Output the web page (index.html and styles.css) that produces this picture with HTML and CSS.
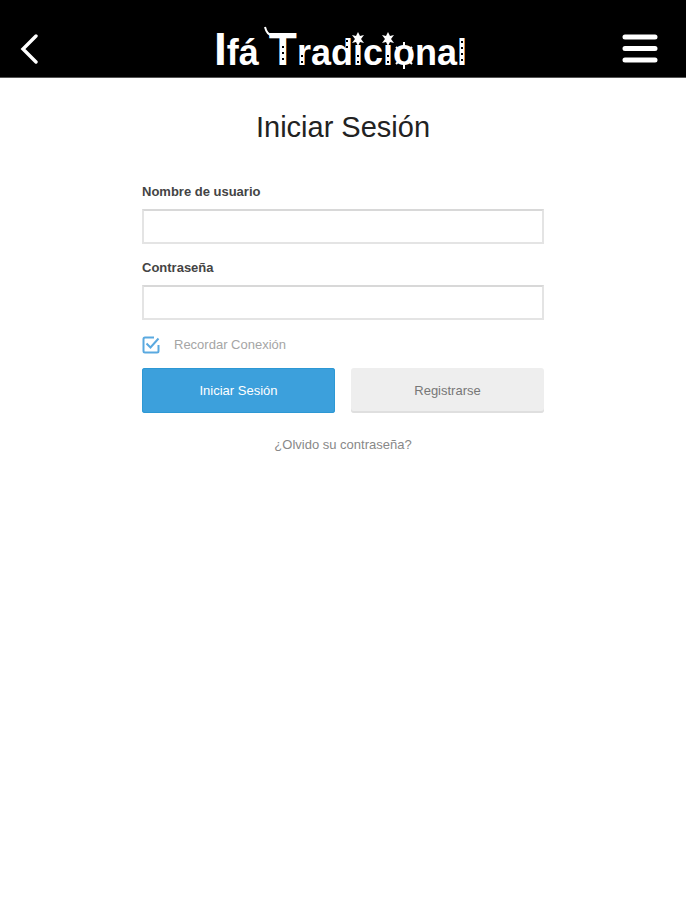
FILE: index.html
```html
<!DOCTYPE html>
<html lang="es">
<head>
    <meta charset="UTF-8">
    <meta name="viewport" content="width=device-width, initial-scale=1.0">
    <title>Ifá Tradicional</title>
    <link rel="stylesheet" href="styles.css">
</head>
<body>
    <header class="header">
        <button type="button" class="icon-btn" aria-label="Volver">
            <svg width="20" height="32" viewBox="0 0 20 32">
                <path d="M16 4L3 17L16 30" fill="none" stroke="#fff" stroke-width="3.4" stroke-linecap="round"/>
            </svg>
        </button>
        <svg class="logo" width="264" height="56" viewBox="0 0 264 56">
            <text class="logo-text" x="7" y="45"><tspan class="logo-cap">I</tspan>fá <tspan class="logo-cap">T</tspan>radicional</text>
            <!-- stars over the i's, rays round the o, curl on the T -->
            <g fill="#fff">
                <path d="M151 12l2 4 4-1-3 4 3 4-4-1-2 4-2-4-4 1 3-4-3-4 4 1z"/>
                <path d="M181 12l2 4 4-1-3 4 3 4-4-1-2 4-2-4-4 1 3-4-3-4 4 1z"/>
            </g>
            <path class="logo-rays" d="M197 22v4M197 45v4M189 27l2 2M205 27l-2 2M189 44l2-2M205 44l-2-2M65 15q-5 0-7-8"/>
            <!-- notches cut in the stems -->
            <path class="logo-dots" d="M76 26v16M95 35v8M151 35v8M181 35v8M140 20v8M255 21v20"/>
        </svg>
        <button type="button" class="icon-btn" aria-label="Menú">
            <svg width="36" height="32" viewBox="0 0 36 32">
                <path d="M3 5H33M3 16.500H33M3 28H33" fill="none" stroke="#fff" stroke-width="5" stroke-linecap="round"/>
            </svg>
        </button>
    </header>

    <main class="login">
        <h1 class="title">Iniciar Sesión</h1>
        <form class="form">
            <label class="label" for="usuario">Nombre de usuario</label>
            <input class="field" type="text" id="usuario" name="usuario">

            <label class="label" for="clave">Contraseña</label>
            <input class="field" type="password" id="clave" name="clave">

            <label class="remember">
                <input class="check" type="checkbox" name="recordar" checked>
                <svg class="check-icon" width="18" height="18" viewBox="0 0 18 18">
                    <path d="M12 1.500H3Q1.500 1.500 1.500 3V15Q1.500 16.500 3 16.500H15Q16.500 16.500 16.500 15V9"/>
                    <path d="M4.500 7.500L8.500 11.500L16.500 2.500"/>
                </svg>
                <span>Recordar Conexión</span>
            </label>

            <div class="buttons">
                <button type="submit" class="btn btn-blue">Iniciar Sesión</button>
                <button type="button" class="btn btn-grey">Registrarse</button>
            </div>

            <a class="forgot" href="#">¿Olvido su contraseña?</a>
        </form>
    </main>
</body>
</html>
```
FILE: styles.css
```css
* {
    box-sizing: border-box;
}

body {
    margin: 0;
    background: #fff;
    font-family: "Liberation Sans", Arial, sans-serif;
    font-size: 13px;
    line-height: 16px;
}

/* Header */
.header {
    display: flex;
    align-items: center;
    justify-content: space-between;
    height: 78px;
    padding: 18px 28px 0 20px;
    background: #000;
    border-bottom: 1px solid #555;
}

.icon-btn {
    display: flex;
    width: 36px;
    padding: 0;
    border: 0;
    background: none;
    cursor: pointer;
}

.logo {
    display: block;
}

.logo-text {
    fill: #fff;
    font-family: "Liberation Sans", Arial, sans-serif;
    font-size: 36px;
    font-weight: 700;
}

.logo-cap {
    font-size: 46px;
}

.logo-rays {
    fill: none;
    stroke: #fff;
    stroke-width: 2;
}

.logo-dots {
    fill: none;
    stroke: #000;
    stroke-width: 2;
    stroke-dasharray: 2 4;
}

/* Login form */
.login {
    max-width: 434px;
    margin: 0 auto;
    padding: 31px 16px;
}

.title {
    margin: 0 0 39px;
    color: #222;
    font-size: 29px;
    font-weight: 400;
    line-height: 36px;
    text-align: center;
}

.form {
    display: flex;
    flex-direction: column;
}

.label {
    margin-bottom: 9px;
    color: #444;
    font-weight: 700;
}

.field {
    width: 100%;
    height: 35px;
    margin: 0 0 16px;
    padding: 0 10px;
    border: 2px solid #e4e4e4;
    border-top-color: #d8d8d8;
    background: #fff;
    font: inherit;
}

.remember {
    display: flex;
    align-items: center;
    gap: 14px;
    height: 18px;
    margin-bottom: 14px;
    color: #a5a5a5;
    cursor: pointer;
}

.check {
    position: absolute;
    width: 18px;
    height: 18px;
    margin: 0;
    opacity: 0;
}

.check-icon {
    fill: none;
    stroke: #5aa9e0;
    stroke-width: 2;
}

.buttons {
    display: flex;
    gap: 16px;
    margin-bottom: 24px;
}

.btn {
    flex: 1;
    height: 45px;
    padding: 0;
    border: 0;
    border-radius: 3px;
    font: inherit;
    cursor: pointer;
}

.btn-blue {
    background: #3ca0dc;
    box-shadow: inset 0 0 0 1px #2d98d4;
    color: #fff;
}

.btn-grey {
    background: #eee;
    box-shadow: inset 0 -2px 0 #dfdfdf;
    color: #777;
}

.forgot {
    align-self: center;
    color: #888;
    text-decoration: none;
}
```
